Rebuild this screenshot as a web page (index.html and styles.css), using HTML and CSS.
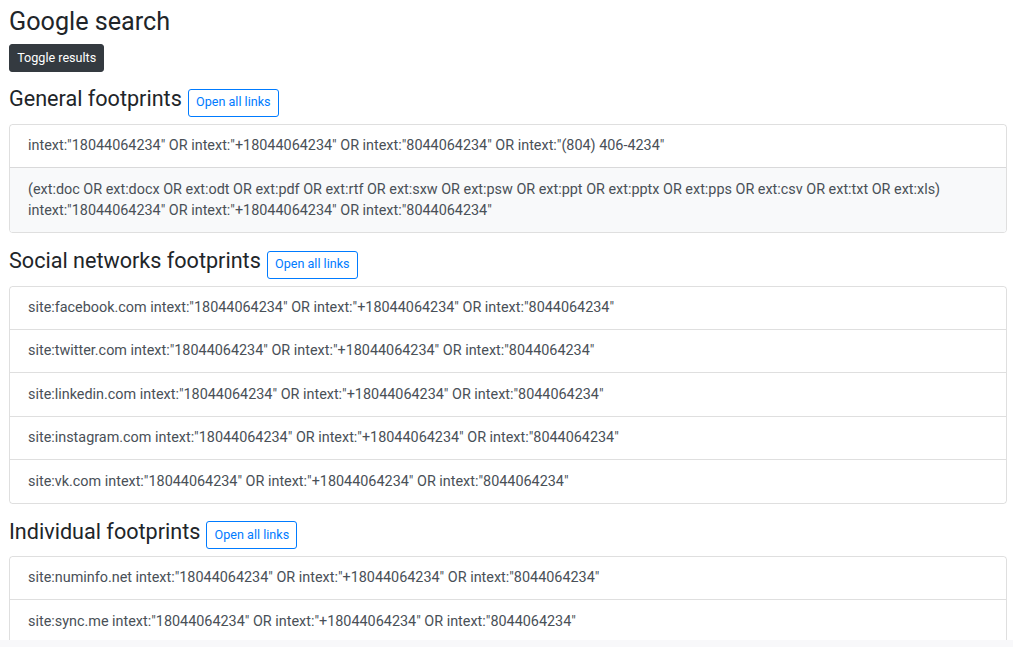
FILE: index.html
```html
<!DOCTYPE html>
<html lang="en">
<head>
    <meta charset="UTF-8">
    <meta name="viewport" content="width=device-width, initial-scale=1.0">
    <title>Google search</title>
    <link rel="stylesheet" href="styles.css">
</head>
<body>
    <div class="page">
        <h3 class="page-title">Google search</h3>
        <button class="btn btn-dark">Toggle results</button>

        <div class="group">
            <div class="group-title">
                <h4>General footprints</h4>
                <button class="btn btn-outline">Open all links</button>
            </div>
            <div class="list">
                <a href="#" class="list-item">intext:"18044064234" OR intext:"+18044064234" OR intext:"8044064234" OR intext:"(804) 406-4234"</a>
                <a href="#" class="list-item active">(ext:doc OR ext:docx OR ext:odt OR ext:pdf OR ext:rtf OR ext:sxw OR ext:psw OR ext:ppt OR ext:pptx OR ext:pps OR ext:csv OR ext:txt OR ext:xls) intext:"18044064234" OR intext:"+18044064234" OR intext:"8044064234"</a>
            </div>
        </div>

        <div class="group">
            <div class="group-title">
                <h4>Social networks footprints</h4>
                <button class="btn btn-outline">Open all links</button>
            </div>
            <div class="list">
                <a href="#" class="list-item">site:facebook.com intext:"18044064234" OR intext:"+18044064234" OR intext:"8044064234"</a>
                <a href="#" class="list-item">site:twitter.com intext:"18044064234" OR intext:"+18044064234" OR intext:"8044064234"</a>
                <a href="#" class="list-item">site:linkedin.com intext:"18044064234" OR intext:"+18044064234" OR intext:"8044064234"</a>
                <a href="#" class="list-item">site:instagram.com intext:"18044064234" OR intext:"+18044064234" OR intext:"8044064234"</a>
                <a href="#" class="list-item">site:vk.com intext:"18044064234" OR intext:"+18044064234" OR intext:"8044064234"</a>
            </div>
        </div>

        <div class="group">
            <div class="group-title">
                <h4>Individual footprints</h4>
                <button class="btn btn-outline">Open all links</button>
            </div>
            <div class="list">
                <a href="#" class="list-item">site:numinfo.net intext:"18044064234" OR intext:"+18044064234" OR intext:"8044064234"</a>
                <a href="#" class="list-item">site:sync.me intext:"18044064234" OR intext:"+18044064234" OR intext:"8044064234"</a>
            </div>
        </div>
    </div>
    <div class="bottom-strip"></div>
</body>
</html>
```

FILE: styles.css
```css
body {
    font-family: Roboto, "Noto Sans", sans-serif;
    color: #212529;
    background-color: #fff;
    margin: 0;
    padding: 0;
    overflow: hidden;
}
.page {
    padding: 7px 6px 0 9px;
}
.page-title {
    font-size: 25.2px;
    font-weight: 400;
    line-height: 1.2;
    margin: 0 0 7px;
}
.btn {
    display: inline-block;
    font-family: inherit;
    font-size: 12.6px;
    line-height: 18.9px;
    padding: 3.6px 7.2px;
    border-radius: 3px;
    border: 1px solid transparent;
    cursor: pointer;
}
.btn-dark {
    background-color: #343a40;
    border-color: #343a40;
    color: #fff;
}
.btn-outline {
    background-color: transparent;
    border-color: #007bff;
    color: #007bff;
}
.btn-outline:hover {
    background-color: #007bff;
    color: #fff;
}
.group {
    margin-top: 15px;
}
.group:first-of-type {
    margin-top: 14px;
}
.group-title {
    display: flex;
    align-items: baseline;
    gap: 6px;
    margin-bottom: 7px;
}
.group-title h4 {
    font-size: 21.6px;
    font-weight: 400;
    line-height: 1.2;
    margin: 0;
}
.list {
    border: 1px solid rgba(0, 0, 0, 0.125);
    border-radius: 3.6px;
    overflow: hidden;
}
.list-item {
    display: block;
    padding: 10.4px 18px;
    font-size: 14.4px;
    line-height: 21.6px;
    color: #495057;
    text-decoration: none;
    border-top: 1px solid rgba(0, 0, 0, 0.125);
}
.list-item:first-child {
    border-top: none;
}
.list-item.active, .list-item:hover {
    background-color: #f8f9fa;
}
.bottom-strip {
    position: fixed;
    left: 0;
    right: 0;
    bottom: 0;
    height: 7px;
    background-color: #f8f8fa;
}
```
